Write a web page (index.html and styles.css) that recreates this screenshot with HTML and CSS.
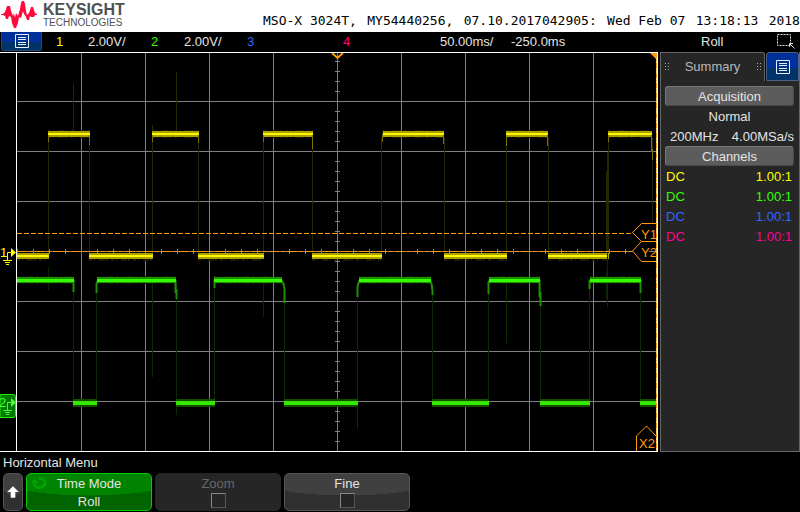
FILE: index.html
```html
<!DOCTYPE html>
<html lang="en">
<head>
<meta charset="utf-8">
<title>Keysight MSO-X 3024T</title>
<link rel="stylesheet" href="styles.css">
</head>
<body>
<header class="banner">
  <svg class="logo" viewBox="0 0 40 32" aria-hidden="true">
    <path fill="#ff0a3c" d="M1 14H3L5 12L7 6H10L11 11L13 16L14 13L15 18L16 13L18 16L20 9L21 3L22 1H24L25 4L26 11L27 15L29 13L31 7H33L35 13L37 14V15H35L34 17H31L30 16L29 20H27L26 17L24 14L23 11L21 18L19 17L18 23L16 28H14L12 23L11 17L9 16L8 19H6L5 16L3 15H1Z"/>
  </svg>
  <div class="brand"><span class="brand-name">KEYSIGHT</span><span class="brand-sub">TECHNOLOGIES</span></div>
  <div class="ident"><span>MSO-X 3024T,</span><span>MY54440256,</span><span>07.10.2017042905:</span><span>Wed Feb 07</span><span>13:18:13</span><span>2018</span></div>
</header>

<section class="status" aria-label="Channel and time base settings">
  <button class="menu-button" type="button" aria-label="Main menu">
    <svg class="list-icon" viewBox="0 0 14 14"><path d="M.5 .5H13.5V13.5H.5ZM3 3.5H11M3 5.5H11M3 8.5H11M3 10.5H11"/></svg>
  </button>
  <span class="ch1">1</span><span>2.00V/</span>
  <span class="ch2">2</span><span>2.00V/</span>
  <span class="ch3">3</span><span class="ch4">4</span>
  <span>50.00ms/</span><span>-250.0ms</span><span>Roll</span>
  <svg class="select-icon" viewBox="0 0 20 16" aria-hidden="true"><path stroke-dasharray="2 1" d="M1.5 1.5H14.5V12.5H1.5Z"/><path d="M13.5 14V10.5H17M14 11L18.5 15.5"/></svg>
</section>

<main class="work">
  <svg class="scope" viewBox="0 52 660 400" role="img" aria-label="Waveforms of channels 1 and 2">
    <path class="grid" d="M81.5 53V451M145.5 53V451M209.5 53V451M273.5 53V451M337.5 53V451M401.5 53V451M465.5 53V451M529.5 53V451M593.5 53V451M17 101.5H656M17 151.5H656M17 201.5H656M17 251.5H656M17 301.5H656M17 351.5H656M17 401.5H656"/>
    <path class="ticks-x" d="M17 251.5H632"/>
    <path class="ticks-y" d="M337.5 61V451"/>

    <path class="edge1" d="M48.5 137V255M89.5 137V255M152.5 125V255M198.5 137V255M263.5 137V255M312.5 137V255M381.5 137V255M444.5 137V255M506.5 137V255M548.5 137V255M608.5 137V255M607.5 152V300M606.5 171V253M652.5 137V223M73.5 84V131M176.5 72V131"/>
    <path class="edge2" d="M73.5 283V402M96.5 283V402M176.5 283V415M214.5 283V402M284.5 283V402M357.5 283V429M432.5 283V402M488.5 283V402M540.5 283V402M589.5 283V402M640.5 283V402M48.5 267V290M152.5 283V377M263.5 283V317M506.5 283V343M607.5 260V307M606.5 271V299"/>

    <path class="fuzz1" d="M48 134H90M152 134H199M263 134H313M382 134H444M506 134H548M608 134H652M17 257H49M89 257H153M198 257H264M312 257H382M444 257H507M548 257H607"/>
    <path class="band1" d="M48 134H90M152 134H199M263 134H313M383 134H444M506 134H548M608 134H652M17 256H49M89 256H153M198 256H264M312 256H382M444 256H507M548 256H607M608 256H609"/>
    <path class="tail1" d="M48.5 134V142M89.5 134V145M152.5 134V142M198.5 134V143M263.5 134V142M312.5 134V149M382.5 134V142M443.5 134V144M506.5 134V146M547.5 134V146M608.5 134V142M651.5 134V152M652.5 149V160"/>
    <path class="core1" d="M48 134H90M152 134H199M263 134H313M383 134H444M506 134H548M608 134H652M17 256H49M89 256H153M198 256H264M312 256H382M444 256H507M548 256H607"/>

    <path class="fuzz2" d="M17 280H74M97 280H176M214 280H281M359 280H431M489 280H540M590 280H640"/>
    <path class="band2" d="M17 280H74M97 280H176M214 280H282M359 280H431M489 280H540M590 280H641"/>
    <path class="lowband2" d="M73 403H97M176 403H215M284 403H358M432 403H489M540 403H590M640 403H656"/>
    <path class="tail2" d="M73.5 280V292M96.5 293V284L98 280M175.5 280V293M176.5 289V299M214.5 288V280M281 280L283.5 284L284.5 289V303M357.5 297V287L358.5 283L360 280M430 280L431.5 284L432.5 291V295M488.5 294V282L490 280M539.5 280V297M540.5 292V306M589.5 289V281L591 280M640.5 280V293"/>
    <path class="core2" d="M17 280.5H74M97 280.5H176M214 280.5H282M359 280.5H431M489 280.5H540M590 280.5H641"/>
    <path class="lowcore2" d="M73 403H97M176 403H215M284 403H358M432 403H489M540 403H590M640 403H656"/>

    <path class="cursor dash" d="M17 233.5H632"/>
    <path class="cursor mix" d="M17 251.5H632"/>
    <path class="cursor flag" d="M656 223.5H641.5L632.5 232.5L641.5 241.5H656M641.5 241.5L632.5 251L641.5 261.5H656M636.5 451V436L646.5 426L656 436"/>
    <text class="tag" x="641" y="239">Y1</text>
    <text class="tag" x="641" y="257">Y2</text>
    <text class="tag" x="639" y="448">X2</text>
    <path class="cursor chevron" d="M332 53L337.5 58L343 53"/>
    <path class="corner" d="M650 53H657V60Z"/>
    <path class="cursor side-soft" d="M656.5 53V451"/>
    <path class="cursor side" d="M656.5 53V451"/>
    <path class="frame" d="M0 52.5H658M16.5 52V451M657.5 52V451M0 451.5H658"/>

    <text class="mark mark1" x="0" y="257">1</text>
    <path class="gnd gnd1" d="M12 252.5H7.5V260M3 260.5H12M5 262.5H10M6 264.5H9"/>
    <path class="arrow1" d="M11 248L16 252.5L11 257Z"/>
    <path class="box2" d="M0 394.5H13Q15.5 394.5 15.5 397V415Q15.5 417.5 13 417.5H0Z"/>
    <text class="mark mark2" x="-1" y="407">2</text>
    <path class="gnd gnd2" d="M12 402.5H7.5V410M3 410.5H12M5 412.5H10M6 414.5H9"/>
    <path class="arrow2" d="M11 398L16 402.5L11 407Z"/>
  </svg>

  <aside class="panel">
    <div class="tabs">
      <div class="tab">
        <svg class="grip" viewBox="0 0 5 10" aria-hidden="true"><path d="M1.5 1V10M4.500 1V10"/></svg>
        <span>Summary</span>
        <svg class="grip" viewBox="0 0 5 10" aria-hidden="true"><path d="M1.5 1V10M4.500 1V10"/></svg>
      </div>
      <button class="menu-button side-button" type="button" aria-label="Summary menu">
        <svg class="list-icon" viewBox="0 0 14 14"><path d="M.5 .5H13.5V13.5H.5ZM3 3.5H11M3 5.5H11M3 8.5H11M3 10.5H11"/></svg>
      </button>
    </div>
    <div class="summary">
      <h2 class="heading">Acquisition</h2>
      <p class="mode">Normal</p>
      <p class="rate"><span>200MHz</span><span>4.00MSa/s</span></p>
      <h2 class="heading">Channels</h2>
      <table class="channels">
        <tr class="ch1"><td>DC</td><td>1.00:1</td></tr>
        <tr class="ch2"><td>DC</td><td>1.00:1</td></tr>
        <tr class="ch3"><td>DC</td><td>1.00:1</td></tr>
        <tr class="ch4"><td>DC</td><td>1.00:1</td></tr>
      </table>
    </div>
  </aside>
</main>

<footer class="softkeys">
  <h1 class="title">Horizontal Menu</h1>
  <div class="keys">
    <button class="key up" type="button" aria-label="Back"><svg class="up-icon" viewBox="0 0 10 12"><path d="M5 1L10 6H7V11H3V6H0Z"/></svg></button>
    <button class="key active" type="button">
      <svg class="turn-icon" viewBox="0 0 18 14" aria-hidden="true"><path class="turn-line" d="M4 7A5.5 4.5 0 1 0 9 2.5"/><path class="turn-head" d="M0 7L4.500 3L9 7Z"/></svg>
      <span>Time Mode</span><span>Roll</span>
    </button>
    <label class="key disabled"><span>Zoom</span><input type="checkbox" disabled></label>
    <label class="key"><span>Fine</span><input type="checkbox"></label>
  </div>
</footer>
</body>
</html>
```
FILE: styles.css
```css
* { box-sizing: border-box; }
body {
  margin: 0;
  background: #000;
  color: #e4e4e4;
  font: 13px/20px "Liberation Sans", sans-serif;
}
h1, h2, p { margin: 0; font-size: 13px; font-weight: normal; }
button { padding: 0; font: inherit; color: inherit; }
svg { display: block; }

.ch1 { color: #ff0; }
.ch2 { color: #3f0; }
.ch3 { color: #36f; }
.ch4 { color: #ff0090; }

.banner {
  display: flex;
  height: 32px;
  background: #fff;
}
.logo { width: 40px; height: 32px; flex: none; }
.brand {
  display: flex;
  flex-direction: column;
  width: 223px;
  padding: 2px 2px 0 3px;
  color: #505050;
}
.brand-name { font-size: 16px; line-height: 15px; font-weight: bold; }
.brand-sub { font-size: 10px; line-height: 11px; }
.ident {
  display: flex;
  flex: 1;
  justify-content: space-between;
  padding-top: 11px;
  color: #000;
  font: 13px/20px "DejaVu Sans Mono", monospace;
  white-space: nowrap;
}

.status {
  display: grid;
  grid-template-columns: 56fr 32fr 63fr 33fr 63fr 96fr 97fr 71fr 190fr 75fr 24fr;
  height: 20px;
  white-space: nowrap;
}
.status > * { min-width: 0; }
.menu-button {
  display: flex;
  align-items: center;
  justify-content: center;
  width: 41px;
  height: 19px;
  margin-left: 1px;
  border: 1px solid #234a80;
  border-top: 0;
  border-radius: 0 0 3px 3px;
  background: linear-gradient(#00309a 55%, #003468 55%);
}
.list-icon { width: 14px; height: 14px; flex: none; fill: none; stroke: #e8f0ff; }
.select-icon { width: 20px; height: 16px; margin-top: 1px; fill: none; stroke: #ddd; }

.work { display: flex; align-items: stretch; }
.scope { flex: 1; min-width: 0; height: auto; }
.scope path { fill: none; }
.scope .grid { stroke: #808080; }
.scope .ticks-x { stroke: #808080; stroke-width: 5; stroke-dasharray: 1 15; }
.scope .ticks-y { stroke: #808080; stroke-width: 5; stroke-dasharray: 1 9; }
.scope .frame { stroke: #fff; }
.edge1 { stroke: #2a2600; }
.edge2 { stroke: #0c2a00; }
.fuzz1 { stroke: #1e1b00; stroke-width: 8; stroke-dasharray: 3 2 1 4 6 1 2 3; }
.band1 { stroke: #a8a200; stroke-width: 6; }
.tail1 { stroke: #7a7400; }
.core1 { stroke: #fff600; stroke-width: 2; }
.fuzz2 { stroke: #0a2000; stroke-width: 8; stroke-dasharray: 2 4 1 3 7 2; }
.band2 { stroke: #1c9000; stroke-width: 6; }
.lowband2 { stroke: #164c00; stroke-width: 8; }
.tail2 { stroke: #1f9000; stroke-width: 2; }
.core2 { stroke: #3f0; stroke-width: 3; }
.lowcore2 { stroke: #35e800; stroke-width: 4; }
.cursor { stroke: #ff9a0a; }
.dash { stroke-dasharray: 5 2; }
.mix { stroke-dasharray: 10 2 4 2; }
.chevron { stroke-width: 2; }
.side-soft { stroke: #ffd890; }
.side { stroke-dasharray: 5 2 1 2; }
.scope .corner { fill: #ff9a0a; }
.scope .flag { fill: #000; }
.tag { fill: #ff9a0a; font-size: 13px; }
.mark { font-size: 13px; }
.mark1, .scope .arrow1 { fill: #ff0; }
.mark2, .scope .arrow2 { fill: #4f3; }
.gnd1 { stroke: #ff0; }
.gnd2 { stroke: #4f3; }
.scope .box2 { fill: #007800; stroke: #2e0; }

.panel {
  width: 140px;
  flex: none;
  border: 1px solid #666;
  border-width: 0 1px 1px;
  background: #262626;
}
.tabs { display: flex; height: 29px; background: #000; }
.tab {
  display: flex;
  flex: 1;
  align-items: center;
  justify-content: space-between;
  padding: 0 3px;
  border: 1px solid #666;
  border-width: 1px 1px 0 0;
  border-radius: 0 3px 0 0;
  background: #262626;
  color: #b8b8b8;
}
.grip { width: 5px; height: 10px; stroke: #aaa; stroke-dasharray: 1 2; }
.side-button {
  width: 33px;
  height: 29px;
  margin: 0 0 0 1px;
  border: 1px solid #506080;
  border-radius: 3px 3px 0 0;
}
.summary { padding: 5px 5px 0 4px; }
.heading {
  height: 20px;
  border: 1px solid #777;
  border-right-color: #484848;
  border-bottom-color: #484848;
  border-radius: 3px;
  background: #5c5c5c;
  line-height: 20px;
  text-align: center;
}
.mode, .rate { padding-top: 2px; line-height: 18px; }
.mode { text-align: center; }
.rate { display: flex; justify-content: space-between; padding-left: 5px; }
.channels { width: 100%; border-collapse: collapse; }
.channels td { padding: 2px 2px 0 1px; line-height: 18px; }
.channels td:last-child { text-align: right; }

.title { padding-left: 3px; line-height: 21px; }
.keys { display: flex; gap: 3px; padding-left: 3px; }
.key {
  position: relative;
  display: flex;
  flex-direction: column;
  align-items: center;
  width: 126px;
  height: 38px;
  padding-top: 1px;
  border: 1px solid #555;
  border-radius: 5px;
  background: radial-gradient(ellipse 80% 60% at 50% 0, #404040 99%, #303030 100%);
  line-height: 18px;
}
.up { width: 20px; justify-content: center; padding: 0; }
.up-icon { width: 12px; height: 14px; fill: #fff; }
.active {
  border-color: #0c0;
  background: radial-gradient(ellipse 80% 60% at 50% 0, #008400 99%, #006400 100%);
}
.turn-icon { position: absolute; left: 3px; top: 2px; width: 18px; height: 14px; }
.turn-line { fill: none; stroke: #00a400; stroke-width: 3; }
.turn-head { fill: #00a400; }
.disabled { border-color: #262626; background: #262626; color: #686868; }
.key input {
  appearance: none;
  width: 15px;
  height: 15px;
  margin: 0;
  border: 1px solid #888;
  border-right-color: #555;
  border-bottom-color: #555;
  background: #262626;
}
```
